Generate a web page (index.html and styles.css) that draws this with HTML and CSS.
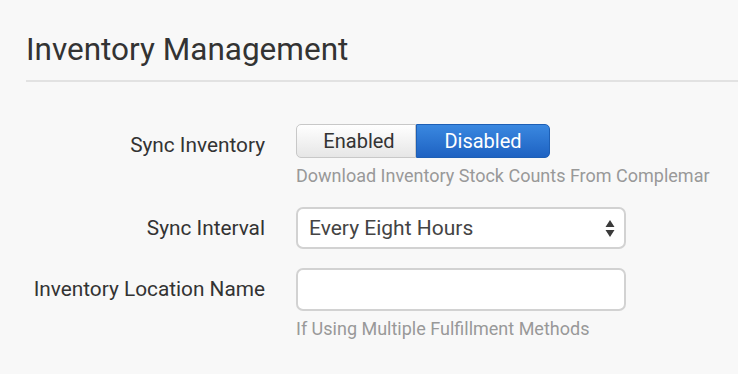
FILE: index.html
```html
<!DOCTYPE html>
<html lang="en">
<head>
    <meta charset="utf-8" />
    <title>Inventory Management</title>
    <link rel="stylesheet" href="styles.css">
</head>
<body>
    <div class="panel">
        <h2 class="section-title">Inventory Management</h2>

        <form class="settings">
            <div class="row">
                <label class="label">Sync Inventory</label>
                <div class="field">
                    <div class="toggle">
                        <button type="button" class="toggle-btn">Enabled</button>
                        <button type="button" class="toggle-btn active">Disabled</button>
                    </div>
                    <div class="help">Download Inventory Stock Counts From Complemar</div>
                </div>
            </div>

            <div class="row">
                <label class="label">Sync Interval</label>
                <div class="field">
                    <div class="select">
                        <span>Every Eight Hours</span>
                        <svg class="arrows" width="10" height="19" viewBox="0 0 10 19">
                            <path d="M5 1 L9.5 8 H0.5 Z M5 18 L9.5 11 H0.5 Z" fill="#3a3a3a"/>
                        </svg>
                    </div>
                </div>
            </div>

            <div class="row">
                <label class="label">Inventory Location Name</label>
                <div class="field">
                    <input class="text-input" type="text">
                    <div class="help">If Using Multiple Fulfillment Methods</div>
                </div>
            </div>
        </form>
    </div>
</body>
</html>
```

FILE: styles.css
```css
* {
    margin: 0;
    padding: 0;
    box-sizing: border-box;
}

body {
    font-family: Roboto, 'Helvetica Neue', Arial, sans-serif;
    background: #f8f8f8;
    color: #333;
}

.panel {
    padding: 32px 0 0 26px;
}

.section-title {
    font-size: 31.5px;
    font-weight: 400;
    color: #333;
    line-height: 36px;
    padding-bottom: 12px;
    border-bottom: 2px solid #e2e2e2;
}

.settings {
    padding-top: 42px;
}

.row {
    display: flex;
    align-items: flex-start;
    margin-bottom: 19px;
}

.label {
    width: 239px;
    text-align: right;
    font-size: 20.8px;
    line-height: 42px;
    color: #333;
}

.field {
    margin-left: 31px;
}

.toggle {
    display: flex;
    width: 254px;
    height: 34px;
}

.toggle-btn {
    font-family: Roboto, Arial, sans-serif;
    font-size: 20px;
    height: 34px;
    border: 1px solid #c8c8c8;
    cursor: pointer;
}

.toggle-btn:first-child {
    width: 120px;
    padding-left: 6px;
    border-radius: 5px 0 0 5px;
    background: linear-gradient(#ffffff, #e6e6e6);
    color: #333;
}

.toggle-btn.active {
    width: 134px;
    border-radius: 0 5px 5px 0;
    border-color: #1d5fb5;
    background: linear-gradient(#3a88e0, #1e62c2);
    color: #fff;
}

.help {
    font-size: 18px;
    color: #999;
    line-height: 24px;
    margin-top: 6px;
}

.select {
    width: 330px;
    height: 42px;
    border: 2px solid #d2d2d2;
    border-radius: 7px;
    background: #fff;
    display: flex;
    align-items: center;
    justify-content: space-between;
    padding: 0 9px 0 11px;
    font-size: 21px;
    color: #444;
}

.text-input {
    display: block;
    width: 330px;
    height: 43px;
    border: 2px solid #d2d2d2;
    border-radius: 7px;
    background: #fff;
}
```
